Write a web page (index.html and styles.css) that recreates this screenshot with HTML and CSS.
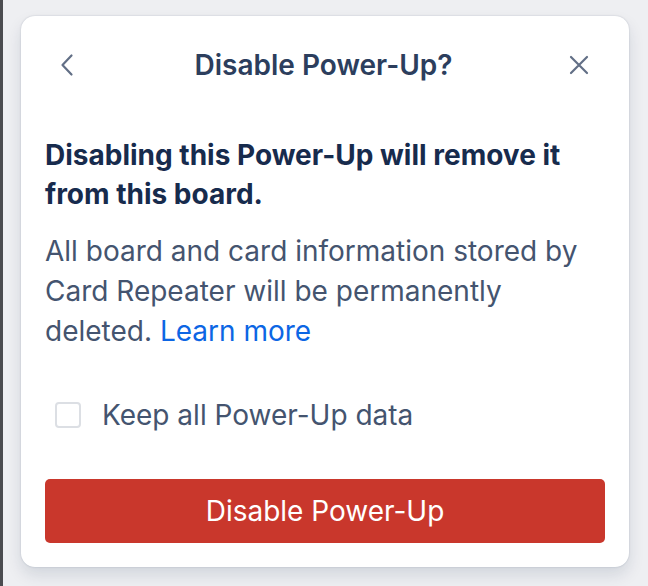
FILE: index.html
```html
<!DOCTYPE html>
<html lang="en">
  <head>
    <meta charset="UTF-8" />
    <meta name="viewport" content="width=device-width, initial-scale=1.0" />
    <title>Disable Power-Up?</title>
    <link rel="stylesheet" href="styles.css">
  </head>
  <body>
    <div class="edge"></div>
    <div class="page">
      <section class="popover">
        <header class="popover-header">
          <button class="icon-btn" aria-label="Back">
            <svg width="20" height="24" viewBox="0 0 20 24">
              <path d="M13.5 2.5 L4.5 12 L13.5 21.5" fill="none" stroke="#626f86" stroke-width="2.2" stroke-linecap="round" stroke-linejoin="round" />
            </svg>
          </button>
          <h2 class="popover-title">Disable Power-Up?</h2>
          <button class="icon-btn" aria-label="Close">
            <svg width="20" height="20" viewBox="0 0 20 20">
              <path d="M2 2 L18 18 M18 2 L2 18" fill="none" stroke="#626f86" stroke-width="2.2" stroke-linecap="round" />
            </svg>
          </button>
        </header>

        <div class="popover-body">
          <p class="warning">Disabling this Power-Up will remove it from this board.</p>
          <p class="info">
            All board and card information stored by Card Repeater will be permanently
            deleted. <a href="#">Learn more</a>
          </p>

          <label class="keep-data">
            <span class="checkbox"></span>
            Keep all Power-Up data
          </label>

          <button class="danger-btn">Disable Power-Up</button>
        </div>
      </section>
    </div>
  </body>
</html>
```

FILE: styles.css
```css
html,
body {
  height: 100%;
}

body {
  font-family: Inter, "Noto Sans", sans-serif;
  margin: 0;
  background-color: #eeeff2;
  display: flex;
}

.edge {
  width: 3px;
  background-color: #4b4c50;
  flex-shrink: 0;
}

.page {
  flex: 1;
  padding: 16px 16px 0 18px;
}

.popover {
  background-color: #ffffff;
  border-radius: 14px;
  box-shadow: 0 8px 16px rgba(9, 30, 66, 0.12), 0 0 2px rgba(9, 30, 66, 0.2);
  width: 608px;
  height: 551px;
  box-sizing: border-box;
}

.popover-header {
  display: flex;
  align-items: center;
  justify-content: space-between;
  height: 98px;
  padding: 0 35px 0 32px;
}

.icon-btn {
  background: none;
  border: none;
  padding: 5px;
  display: flex;
  cursor: pointer;
}

.popover-title {
  margin: 0;
  font-size: 28px;
  font-weight: 600;
  color: #2c3e5d;
}

.popover-body {
  padding: 22px 24px 0 24px;
}

.warning {
  margin: 0 0 17px;
  font-size: 28px;
  line-height: 39px;
  font-weight: 700;
  color: #172b4d;
}

.info {
  margin: 0;
  font-size: 28px;
  line-height: 40px;
  color: #44546f;
}

.info a {
  color: #0c66e4;
  text-decoration: none;
}

.keep-data {
  display: flex;
  align-items: center;
  gap: 21px;
  height: 40px;
  margin: 44px 0 0 10px;
  font-size: 28px;
  color: #44546f;
}

.checkbox {
  width: 26px;
  height: 26px;
  border: 2px solid #dcdfe4;
  border-radius: 4px;
  box-sizing: border-box;
}

.danger-btn {
  display: block;
  width: 560px;
  height: 64px;
  margin-top: 44px;
  background-color: #c9372c;
  color: #ffffff;
  border: none;
  border-radius: 5px;
  font-family: inherit;
  font-size: 28px;
  cursor: pointer;
}
```
